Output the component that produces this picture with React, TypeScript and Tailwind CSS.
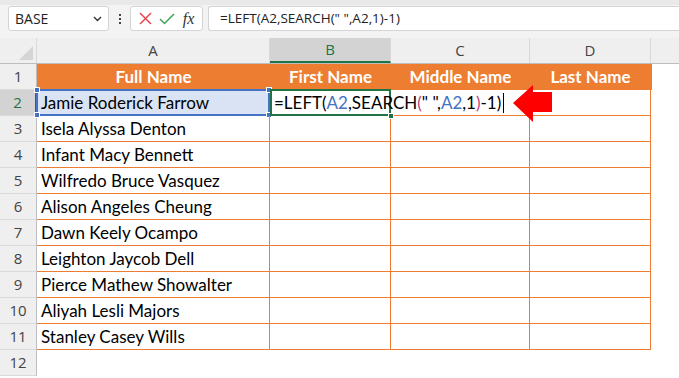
import React from 'react';

const names = [
  'Jamie Roderick Farrow',
  'Isela Alyssa Denton',
  'Infant Macy Bennett',
  'Wilfredo Bruce Vasquez',
  'Alison Angeles Cheung',
  'Dawn Keely Ocampo',
  'Leighton Jaycob Dell',
  'Pierce Mathew Showalter',
  'Aliyah Lesli Majors',
  'Stanley Casey Wills',
];

const cols = ['A', 'B', 'C', 'D'];
const grid = 'grid grid-cols-[37px_233px_121px_139px_121px_1fr]';

function Handle({ className }: { className: string }) {
  return <span className={`absolute w-[6px] h-[6px] border border-white ${className}`} />;
}

function RowHeader({ n, active }: { n: number; active?: boolean }) {
  return (
    <div
      className={`h-[26px] flex items-center justify-center border-b border-[#d9d9d9] font-['Open_Sans',sans-serif] text-[15px] ${
        active
          ? 'bg-[#d3d3d3] text-[#217346] border-r-2 border-r-[#217346]'
          : 'bg-[#efefef] text-[#444] border-r border-r-[#bdbdbd]'
      }`}
    >
      {n}
    </div>
  );
}

export default function App() {
  return (
    <div className="w-[679px] h-[378px] overflow-hidden bg-white font-['Open_Sans',sans-serif] relative">
      {/* Formula bar */}
      <div className="bg-[#f3f3f3] border-t-[5px] border-[#e9e9e9] h-[38px] flex items-start pt-[1px]">
        <div className="ml-[8px] w-[101px] h-[25px] bg-white border border-[#d4d4d4] rounded-[3px] flex items-center justify-between px-[6px] text-[14px] text-[#222]">
          <span>BASE</span>
          <svg width="9" height="6" viewBox="0 0 9 6">
            <path d="M1 1l3.5 3.5L8 1" fill="none" stroke="#333" strokeWidth="1.4" />
          </svg>
        </div>
        <div className="w-[21px] h-[25px] flex flex-col items-center justify-center gap-[2px]">
          <span className="w-[2px] h-[2px] bg-[#444]" />
          <span className="w-[2px] h-[2px] bg-[#444]" />
          <span className="w-[2px] h-[2px] bg-[#444]" />
        </div>
        <div className="w-[73px] h-[25px] bg-white border border-[#d4d4d4] rounded-[3px] flex items-center justify-around px-[4px]">
          <svg width="13" height="13" viewBox="0 0 13 13">
            <path d="M1 1l11 11M12 1L1 12" stroke="#e8484d" strokeWidth="1.5" />
          </svg>
          <svg width="16" height="12" viewBox="0 0 16 12">
            <path d="M1 6l4.5 4.5L15 1" fill="none" stroke="#3fa35a" strokeWidth="1.5" />
          </svg>
          <span className="font-['Liberation_Serif',serif] italic text-[16px] text-[#333] leading-none">fx</span>
        </div>
        <div className="ml-[5px] flex-1 h-[25px] bg-white border border-[#d4d4d4] rounded-l-[3px] border-r-0 flex items-center pl-[11px] text-[13.5px] text-[#222]">
          =LEFT(A2,SEARCH(" ",A2,1)-1)
        </div>
      </div>

      {/* Column headers */}
      <div className={`${grid} h-[26px] bg-[#efefef] border-b border-[#bdbdbd] text-[15px] text-[#444]`}>
        <div className="relative border-r border-[#d9d9d9]">
          <svg className="absolute right-[3px] bottom-[3px]" width="14" height="14" viewBox="0 0 14 14">
            <path d="M14 0L14 14L0 14Z" fill="#d5d5d5" />
          </svg>
        </div>
        {cols.map((c) => (
          <div
            key={c}
            className={`flex items-center justify-center border-r border-[#d9d9d9] ${
              c === 'B' ? 'bg-[#d3d3d3] text-[#217346] border-b-2 border-b-[#217346]' : ''
            }`}
          >
            {c}
          </div>
        ))}
        <div />
      </div>

      {/* Sheet body */}
      <div className={`${grid} font-['Lato',sans-serif] text-[17px] text-black`}>
        {/* Row 1 */}
        <RowHeader n={1} />
        {['Full Name', 'First Name', 'Middle Name', 'Last Name'].map((h) => (
          <div key={h} className="h-[26px] bg-[#ed7d31] text-white font-bold flex items-center justify-center">
            {h}
          </div>
        ))}
        <div className="h-[26px] border-l border-[#ed7d31]" />

        {names.map((name, i) => {
          const row = i + 2;
          const first = row === 2;
          return (
            <React.Fragment key={name}>
              <RowHeader n={row} active={first} />
              <div
                className={`h-[26px] relative flex items-center pl-[4px] pt-[1px] border-b border-r border-[#ed7d31] ${
                  first ? 'bg-[#dae3f3]' : ''
                }`}
              >
                {first && (
                  <>
                    <span className="absolute -inset-[1px] border-2 border-[#4472c4] pointer-events-none" />
                    <Handle className="bg-[#4472c4] -left-[3px] -top-[3px]" />
                    <Handle className="bg-[#4472c4] -right-[3px] -top-[3px]" />
                    <Handle className="bg-[#4472c4] -left-[3px] -bottom-[3px]" />
                    <Handle className="bg-[#4472c4] -right-[3px] -bottom-[3px]" />
                  </>
                )}
                <span className="relative">{name}</span>
              </div>
              {first ? (
                <div className="col-span-3 h-[26px] border-b border-r border-[#ed7d31] relative bg-white">
                  <span className="absolute left-0 top-[-1px] w-[121px] h-[27px] border-2 border-[#217346]" />
                  <span className="absolute left-[118px] top-[23px] w-[6px] h-[6px] bg-[#217346] border border-white" />
                  <div className="relative h-full flex items-center pl-[4px] pt-[1px] whitespace-nowrap">
                    =LEFT(<span className="text-[#4472c4]">A2</span>,SEARCH
                    <span className="text-[#c0407a]">(</span>" ",
                    <span className="text-[#4472c4]">A2</span>,1<span className="text-[#c0407a]">)</span>-1)
                    <span className="w-[1px] h-[20px] bg-black ml-[2px]" />
                  </div>
                </div>
              ) : (
                <>
                  <div className="h-[26px] border-b border-r border-[#ed7d31]" />
                  <div className="h-[26px] border-b border-r border-[#ed7d31]" />
                  <div className="h-[26px] border-b border-r border-[#ed7d31]" />
                </>
              )}
              <div className="h-[26px]" />
            </React.Fragment>
          );
        })}
        <RowHeader n={12} />
        <div className="col-span-5 h-[26px]" />
      </div>

      {/* Red arrow annotation */}
      <svg className="absolute left-[512px] top-[84px]" width="42" height="40" viewBox="0 0 42 40">
        <path d="M1 19L21 1V8H40V28H21V38Z" fill="#ff0000" />
      </svg>
    </div>
  );
}
